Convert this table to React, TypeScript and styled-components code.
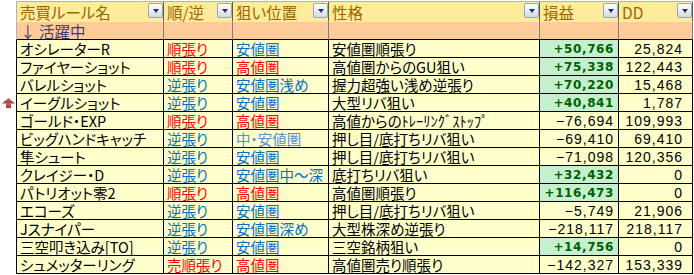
import React from 'react';
import styled, { createGlobalStyle } from 'styled-components';

const GlobalStyle = createGlobalStyle`
  html, body {
    margin: 0;
    padding: 0;
    background: #ffffff;
  }
  body {
    font-family: 'Noto Sans CJK JP', sans-serif;
  }
`;

const Page = styled.div`
  width: 694px;
  height: 275px;
  padding-top: 1px;
  box-sizing: border-box;
`;

const Sheet = styled.div`
  display: grid;
  grid-template-columns: 148px 69px 96px 211px 79px 74px;
  margin-left: 16px;
  width: 677px;
  border-top: 1px solid #a9b4c4;
`;

type Tone = 'head' | 'group' | 'body';

const bg = { head: '#ffeb9c', group: '#ffcc99', body: '#ffffcc' };

const Cell = styled.div<{ $tone: Tone; $first?: boolean; $right?: boolean; $good?: boolean; $pad?: number }>`
  position: relative;
  box-sizing: border-box;
  height: ${(p) => (p.$tone === 'head' ? 20 : 18)}px;
  display: flex;
  align-items: center;
  justify-content: ${(p) => (p.$right ? 'flex-end' : 'flex-start')};
  padding: 1px ${(p) => p.$pad ?? 0}px 0 ${(p) => (p.$right ? 0 : 3)}px;
  background: ${(p) => (p.$good ? '#c6efce' : bg[p.$tone])};
  border-right: 1px solid ${(p) => (p.$tone === 'head' ? '#5a5a5a' : p.$tone === 'group' ? '#7f7f7f' : '#000')};
  border-bottom: 1px solid ${(p) => (p.$tone === 'head' ? '#ffeb9c' : '#000')};
  border-left: ${(p) => (p.$first ? `1px solid ${p.$tone === 'body' ? '#000' : '#a9b4c4'}` : 'none')};
  font-size: 14.5px;
  font-feature-settings: 'palt';
  line-height: 16px;
  white-space: nowrap;
`;

const HeadLabel = styled.span`
  flex: 1;
  color: #9c6500;
  font-size: 15.5px;
`;

const FilterButton = styled.span`
  align-self: flex-start;
  flex: none;
  width: 15px;
  height: 15px;
  box-sizing: border-box;
  border: 1px solid #9ba4b6;
  border-radius: 2px;
  background: linear-gradient(#ffffff, #d6dae3);
  display: flex;
  align-items: center;
  justify-content: center;

  &::after {
    content: '';
    border-left: 3px solid transparent;
    border-right: 3px solid transparent;
    border-top: 4px solid #283456;
    margin-top: 1px;
  }
`;

const GroupLabel = styled.span`
  color: #3f3f76;
  font-size: 15.5px;
`;

const Text = styled.span<{ $color?: string }>`
  color: ${(p) => p.$color ?? '#000'};
`;

const Num = styled.span<{ $good?: boolean }>`
  font-family: ${(p) => (p.$good ? "'DejaVu Sans', sans-serif" : "'Liberation Sans', sans-serif")};
  font-weight: ${(p) => (p.$good ? 700 : 400)};
  font-size: ${(p) => (p.$good ? 12 : 14)}px;
  letter-spacing: ${(p) => (p.$good ? 0.6 : 1)}px;
  color: ${(p) => (p.$good ? '#006100' : '#000')};
`;

const Marker = styled.svg`
  position: absolute;
  left: -15px;
  top: 50%;
  transform: translateY(-50%);
`;

const RED = '#ff0000';
const BLUE = '#0070c0';
const PALE = '#558ed5';

const dirColor = (d: string) => (d.includes('順') ? RED : BLUE);
const posColor = (p: string) => (p.startsWith('中') ? PALE : p.startsWith('高') ? RED : BLUE);

const fmt = (n: number) => (n > 0 ? '+' : n < 0 ? '−' : '') + Math.abs(n).toLocaleString('en-US');

type Rule = { name: string; dir: string; pos: string; desc: string; pl: number; dd: number; flag?: boolean };

const rules: Rule[] = [
  { name: 'オシレーターR', dir: '順張り', pos: '安値圏', desc: '安値圏順張り', pl: 50766, dd: 25824 },
  { name: 'ファイヤーショット', dir: '順張り', pos: '高値圏', desc: '高値圏からのGU狙い', pl: 75338, dd: 122443 },
  { name: 'バレルショット', dir: '逆張り', pos: '安値圏浅め', desc: '握力超強い浅め逆張り', pl: 70220, dd: 15468 },
  { name: 'イーグルショット', dir: '逆張り', pos: '安値圏', desc: '大型リバ狙い', pl: 40841, dd: 1787, flag: true },
  { name: 'ゴールド・EXP', dir: '順張り', pos: '高値圏', desc: '高値からのﾄﾚｰﾘﾝｸﾞｽﾄｯﾌﾟ', pl: -76694, dd: 109993 },
  { name: 'ビッグハンドキャッチ', dir: '逆張り', pos: '中・安値圏', desc: '押し目/底打ちリバ狙い', pl: -69410, dd: 69410 },
  { name: '隼シュート', dir: '逆張り', pos: '安値圏', desc: '押し目/底打ちリバ狙い', pl: -71098, dd: 120356 },
  { name: 'クレイジー・D', dir: '逆張り', pos: '安値圏中～深', desc: '底打ちリバ狙い', pl: 32432, dd: 0 },
  { name: 'パトリオット零2', dir: '順張り', pos: '高値圏', desc: '高値圏順張り', pl: 116473, dd: 0 },
  { name: 'エコーズ', dir: '逆張り', pos: '安値圏', desc: '押し目/底打ちリバ狙い', pl: -5749, dd: 21906 },
  { name: 'Jスナイパー', dir: '逆張り', pos: '安値圏深め', desc: '大型株深め逆張り', pl: -218117, dd: 218117 },
  { name: '三空叩き込み[TO]', dir: '逆張り', pos: '安値圏', desc: '三空銘柄狙い', pl: 14756, dd: 0 },
  { name: 'シュメッターリング', dir: '売順張り', pos: '高値圏', desc: '高値圏売り順張り', pl: -142327, dd: 153339 },
];

const headers = ['売買ルール名', '順/逆', '狙い位置', '性格', '損益', 'DD'];

const App: React.FC = () => {
  return (
    <>
      <GlobalStyle />
      <Page>
        <Sheet>
          {headers.map((h, i) => (
            <Cell key={h} $tone="head" $first={i === 0}>
              <HeadLabel>{h}</HeadLabel>
              <FilterButton />
            </Cell>
          ))}

          <Cell $tone="group" $first>
            <GroupLabel>↓ 活躍中</GroupLabel>
          </Cell>
          {[1, 2, 3, 4, 5].map((k) => (
            <Cell key={k} $tone="group" />
          ))}

          {rules.map((r) => (
            <React.Fragment key={r.name}>
              <Cell $tone="body" $first>
                {r.flag && (
                  <Marker width="13" height="10" viewBox="0 0 13 10">
                    <defs>
                      <linearGradient id="mk" x1="0" y1="0" x2="0" y2="1">
                        <stop offset="0" stopColor="#d9695f" />
                        <stop offset="1" stopColor="#a6332b" />
                      </linearGradient>
                    </defs>
                    <polygon points="6.5,0 0,5.5 13,5.5" fill="url(#mk)" />
                    <rect x="4" y="5" width="5" height="5" fill="url(#mk)" />
                  </Marker>
                )}
                <Text>{r.name}</Text>
              </Cell>
              <Cell $tone="body">
                <Text $color={dirColor(r.dir)}>{r.dir}</Text>
              </Cell>
              <Cell $tone="body">
                <Text $color={posColor(r.pos)}>{r.pos}</Text>
              </Cell>
              <Cell $tone="body">
                <Text>{r.desc}</Text>
              </Cell>
              <Cell $tone="body" $right $pad={4} $good={r.pl > 0}>
                <Num $good={r.pl > 0}>{fmt(r.pl)}</Num>
              </Cell>
              <Cell $tone="body" $right $pad={9}>
                <Num>{r.dd.toLocaleString('en-US')}</Num>
              </Cell>
            </React.Fragment>
          ))}
        </Sheet>
      </Page>
    </>
  );
};

export default App;
